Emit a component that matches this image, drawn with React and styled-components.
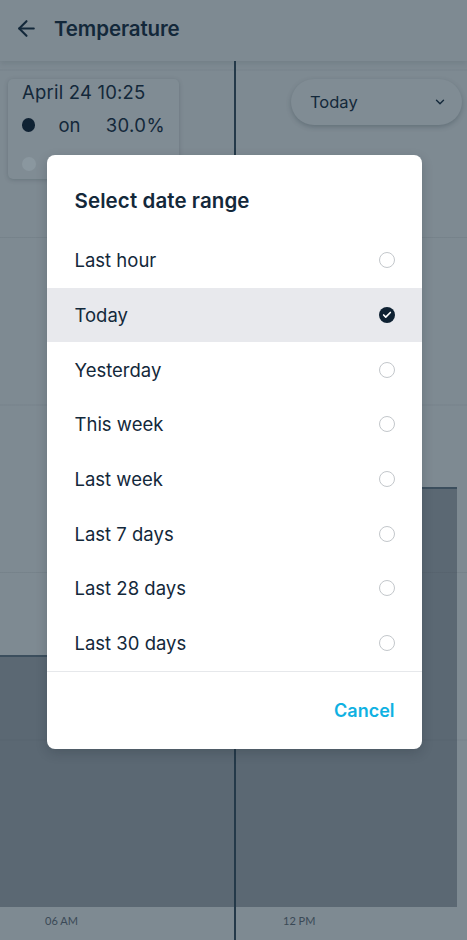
import React from "react";
import styled, { createGlobalStyle } from "styled-components";
import { ArrowLeft, ChevronDown, Check } from "lucide-react";

const GlobalStyle = createGlobalStyle`
  html, body {
    margin: 0;
    padding: 0;
    background: #7e8a92;
  }
  * {
    box-sizing: border-box;
  }
`;

const OPTIONS = [
  "Last hour",
  "Today",
  "Yesterday",
  "This week",
  "Last week",
  "Last 7 days",
  "Last 28 days",
  "Last 30 days",
];

const App = () => {
  const selected = "Today";
  return (
    <Screen>
      <GlobalStyle />
      <Header>
        <ArrowLeft size={25} strokeWidth={2} color="#13283a" />
        <Title>Temperature</Title>
      </Header>
      <Chart>
        <Column>
          <Bar $height={252} />
        </Column>
        <Column $wide={222}>
          <Bar $height={420} />
        </Column>
        <Gutter />
        <TooltipCard>
          <TooltipDate>April 24 10:25</TooltipDate>
          <TooltipRow>
            <Dot $color="#0f2233" />
            <TooltipLabel>on</TooltipLabel>
            <TooltipValue>30.0%</TooltipValue>
          </TooltipRow>
          <TooltipRow>
            <Dot $color="#8a979f" />
          </TooltipRow>
        </TooltipCard>
        <RangeSelect>
          <span>Today</span>
          <ChevronDown size={14} strokeWidth={2.4} color="#13283a" />
        </RangeSelect>
      </Chart>
      <Axis>
        <AxisLabel $left={45}>06 AM</AxisLabel>
        <AxisLabel $left={283}>12 PM</AxisLabel>
      </Axis>
      <Cursor />

      <Overlay>
        <Dialog>
          <DialogTitle>Select date range</DialogTitle>
          <OptionList>
            {OPTIONS.map((o) => (
              <Option key={o} $active={o === selected}>
                <span>{o}</span>
                {o === selected ? (
                  <RadioChecked>
                    <Check size={10} strokeWidth={4} color="#ffffff" />
                  </RadioChecked>
                ) : (
                  <Radio />
                )}
              </Option>
            ))}
          </OptionList>
          <DialogFooter>
            <CancelButton>Cancel</CancelButton>
          </DialogFooter>
        </Dialog>
      </Overlay>
    </Screen>
  );
};

const Screen = styled.div`
  position: relative;
  width: 467px;
  height: 940px;
  overflow: hidden;
  background: #7e8a92;
  font-family: Inter, "Noto Sans", sans-serif;
  color: #13283a;
`;

const Header = styled.div`
  height: 61px;
  display: flex;
  align-items: center;
  padding: 0 0 4px 14px;
  gap: 15px;
  background: #7e8a92;
  box-shadow: 0 3px 5px rgba(40, 55, 65, 0.12);
  position: relative;
  z-index: 1;
`;

const Title = styled.h1`
  margin: 0;
  font-size: 20.5px;
  font-weight: 600;
  letter-spacing: -0.1px;
  color: #13283a;
`;

const Chart = styled.div`
  position: relative;
  height: 846px;
  display: flex;
  align-items: stretch;

  &::after {
    content: "";
    position: absolute;
    inset: 0;
    pointer-events: none;
    background-image: linear-gradient(
      to bottom,
      rgba(50, 65, 75, 0.1) 0,
      rgba(50, 65, 75, 0.1) 1px,
      transparent 1px
    );
    background-size: 100% 167.5px;
    background-position: 0 8.5px;
  }
`;

const Column = styled.div`
  width: ${(p) => p.$wide || 235}px;
  display: flex;
  flex-direction: column;
  justify-content: flex-end;
`;

const Bar = styled.div`
  height: ${(p) => p.$height}px;
  background: #5b6873;
  border-top: 2px solid #3b4e5d;
`;

const Gutter = styled.div`
  flex: 1;
`;

const TooltipCard = styled.div`
  position: absolute;
  left: 8px;
  top: 18px;
  width: 171px;
  height: 100px;
  padding: 1px 14px;
  background: #808c94;
  border-radius: 5px;
  box-shadow: 0 1px 4px rgba(40, 55, 65, 0.25);
  z-index: 2;
`;

const TooltipDate = styled.div`
  font-size: 18.5px;
  line-height: 24px;
  letter-spacing: 0.2px;
  color: #13283a;
`;

const TooltipRow = styled.div`
  display: flex;
  align-items: center;
  height: 36px;
  margin-top: 3px;
  font-size: 18.5px;
`;

const Dot = styled.span`
  width: 14px;
  height: 14px;
  border-radius: 50%;
  background: ${(p) => p.$color};
`;

const TooltipLabel = styled.span`
  margin-left: 23px;
  width: 49px;
`;

const TooltipValue = styled.span`
  letter-spacing: 0.4px;
`;

const RangeSelect = styled.div`
  position: absolute;
  left: 291px;
  top: 18px;
  width: 171px;
  height: 46px;
  border-radius: 23px;
  background: #808c94;
  box-shadow: 0 2px 5px rgba(40, 55, 65, 0.3);
  display: flex;
  align-items: center;
  justify-content: space-between;
  padding: 0 15px 0 19px;
  font-size: 16.5px;
  color: #13283a;
  z-index: 2;
`;

const Axis = styled.div`
  position: relative;
  height: 33px;
  background: #7e8a92;
`;

const AxisLabel = styled.span`
  position: absolute;
  left: ${(p) => p.$left}px;
  top: 7px;
  font-family: Lato, "Open Sans", sans-serif;
  font-size: 11px;
  color: #3a4956;
`;

const Cursor = styled.div`
  position: absolute;
  left: 234px;
  top: 61px;
  width: 2px;
  bottom: 0;
  background: #243949;
  z-index: 1;
`;

const Overlay = styled.div`
  position: absolute;
  inset: 0;
  display: flex;
  justify-content: center;
  align-items: flex-start;
  padding-top: 155px;
  z-index: 5;
`;

const Dialog = styled.div`
  width: 375px;
  margin-left: 1px;
  background: #ffffff;
  border-radius: 8px;
  overflow: hidden;
  box-shadow: 0 4px 12px rgba(20, 30, 40, 0.2);
`;

const DialogTitle = styled.h2`
  margin: 0;
  height: 78px;
  display: flex;
  align-items: center;
  padding: 12px 28px 0;
  font-size: 20.5px;
  font-weight: 600;
  letter-spacing: 0.1px;
  color: #13283a;
`;

const OptionList = styled.div`
  display: flex;
  flex-direction: column;
`;

const Option = styled.div`
  height: 54.7px;
  display: flex;
  align-items: center;
  justify-content: space-between;
  padding: 0 27px 0 28px;
  font-size: 18.5px;
  color: #13283a;
  background: ${(p) => (p.$active ? "#e8e9ed" : "transparent")};
`;

const Radio = styled.span`
  width: 16px;
  height: 16px;
  border-radius: 50%;
  border: 1.5px solid #c3c7cb;
`;

const RadioChecked = styled.span`
  width: 16px;
  height: 16px;
  border-radius: 50%;
  background: #0f2233;
  display: flex;
  align-items: center;
  justify-content: center;
`;

const DialogFooter = styled.div`
  height: 78px;
  border-top: 1px solid #e6e8eb;
  display: flex;
  align-items: center;
  justify-content: flex-end;
  padding-right: 27px;
`;

const CancelButton = styled.button`
  border: none;
  background: none;
  padding: 0;
  font-family: Inter, "Noto Sans", sans-serif;
  font-size: 18px;
  font-weight: 600;
  color: #0fb1e2;
  cursor: pointer;
`;

export default App;
